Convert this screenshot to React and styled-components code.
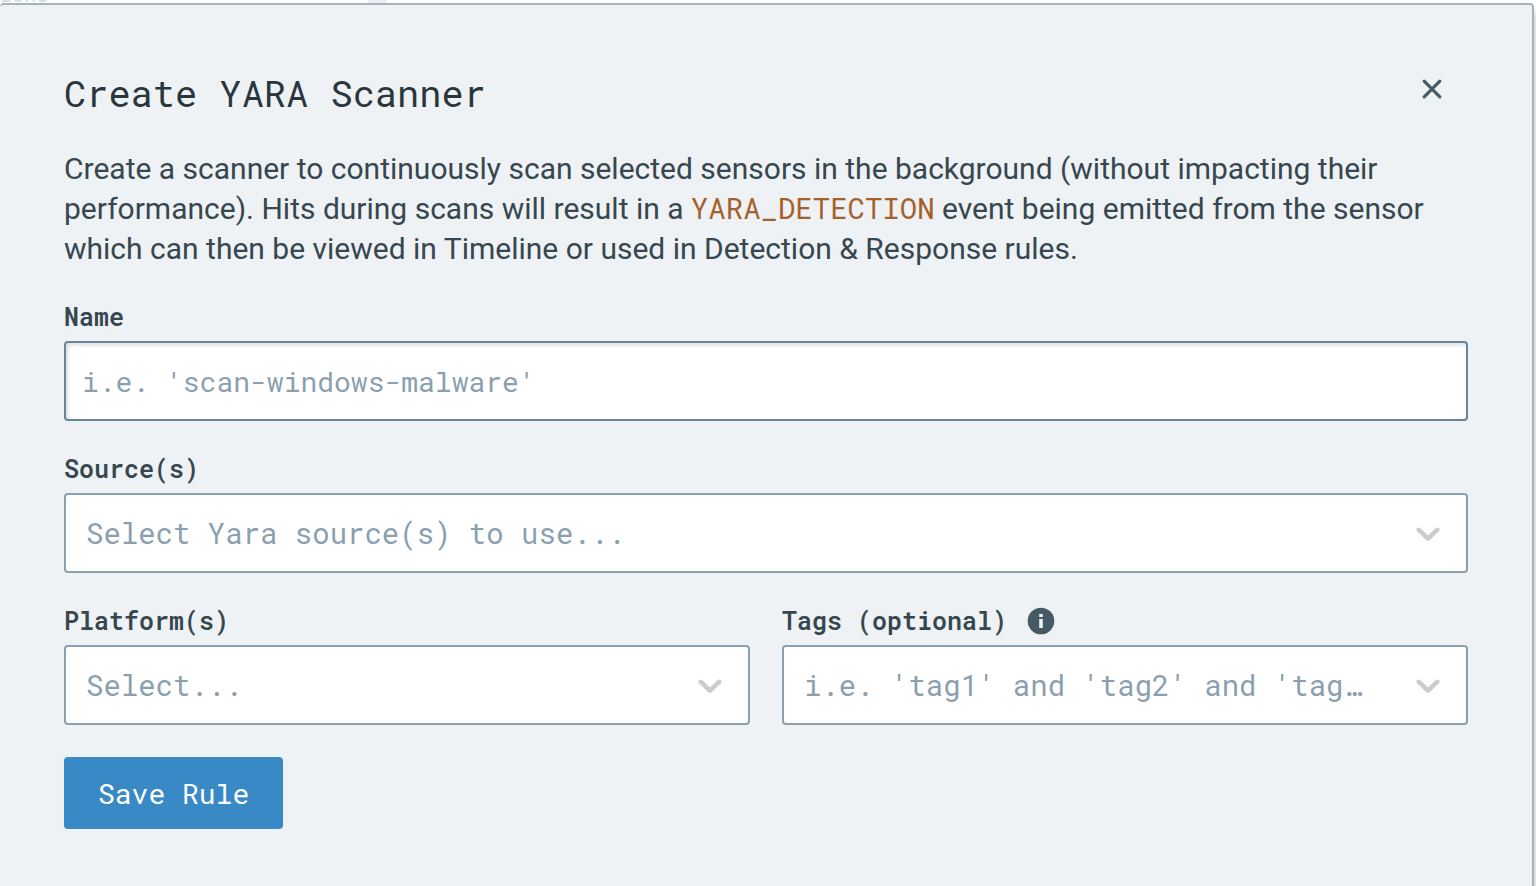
import { useId } from "react"
import styled, { createGlobalStyle } from "styled-components"

const mono = `"Roboto Mono", "Liberation Mono", monospace`

const GlobalStyle = createGlobalStyle`
    * {
        box-sizing: border-box;
    }

    body {
        margin: 0;
        background: #fff;
        color: #37474f;
        font-family: Roboto, "Liberation Sans", sans-serif;
    }
`;

//Page behind the dialog
const Page = styled.div`
    display: flex;
    flex-direction: column;
    min-height: 100vh;
    overflow: hidden;
`;

const Backdrop = styled.div`
    display: flex;
    align-items: flex-end;
    height: 3px;
    overflow: hidden;
`;

const BackdropHeading = styled.span`
    width: 368px;
    color: #d8d8dc;
    font-family: ${mono};
    font-size: 20px;
    line-height: 18px;
`;

const BackdropColumn = styled.div`
    align-self: stretch;
    width: 19px;
    background: #eeeef2;
`;

//Dialog
const Dialog = styled.section`
    flex: 1;
    margin-right: 2px;
    padding: 64px 64px 56px;
    border: 2px solid #a2b4c2;
    border-width: 2px 2px 0 0;
    border-radius: 4px 4px 0 0;
    background: #eef2f5;
    box-shadow: 0 8px 8px rgba(0, 0, 0, 0.3);
`;

const Header = styled.header`
    display: flex;
    align-items: flex-start;
    justify-content: space-between;
    padding-right: 22px;
`;

const Title = styled.h1`
    margin: 0;
    color: #29363d;
    font-family: ${mono};
    font-size: 37px;
    font-weight: 400;
    line-height: 48px;
`;

const CloseButton = styled.button`
    display: flex;
    padding: 6px 0;
    border: 0;
    background: none;
    color: #455a64;
    cursor: pointer;
`;

const Description = styled.p`
    margin: 32px 0;
    font-size: 30px;
    line-height: 40px;
`;

const EventName = styled.code`
    color: #a6602b;
    font-family: ${mono};
    font-size: 29px;
    line-height: 32px;
`;

//Form
const Form = styled.form`
    display: grid;
    grid-template-columns: 1fr 1fr;
    gap: 32px;
`;

const Field = styled.div`
    display: flex;
    flex-direction: column;
    gap: 8px;
    min-width: 0;
    grid-column: ${({ $wide }) => ($wide ? "1 / -1" : "auto")};
`;

const LabelRow = styled.div`
    display: flex;
    align-items: center;
    gap: 20px;
    height: 32px;
`;

const Label = styled.label`
    font-family: ${mono};
    font-size: 25px;
    font-weight: 600;
    line-height: 32px;
`;

const TextInput = styled.input`
    width: 100%;
    height: 80px;
    padding: 0 16px;
    border: 2px solid #67859a;
    border-radius: 4px;
    background: #fff;
    box-shadow: inset 2px 2px 4px rgba(0, 0, 0, 0.14);
    color: #37474f;
    font-family: ${mono};
    font-size: 28px;
    outline: none;

    &::placeholder {
        color: #8a9fb0;
        opacity: 1;
    }
`;

const SelectBox = styled.div`
    display: grid;
    align-items: center;
`;

const Select = styled.select`
    grid-area: 1 / 1;
    width: 100%;
    min-width: 0;
    height: 80px;
    padding: 0 94px 0 20px;
    border: 2px solid #8a9fb0;
    border-radius: 4px;
    appearance: none;
    background: #fff;
    color: #8a9fb0;
    font-family: ${mono};
    font-size: 29px;
    text-overflow: ellipsis;
    white-space: nowrap;
    overflow: hidden;
`;

const Chevron = styled.svg`
    grid-area: 1 / 1;
    justify-self: end;
    width: 40px;
    height: 40px;
    margin-right: 20px;
    fill: #ccc;
    pointer-events: none;
`;

const SaveButton = styled.button`
    justify-self: start;
    height: 72px;
    padding: 0 34px;
    border: 0;
    border-radius: 4px;
    background: #3989c7;
    color: #fff;
    font-family: ${mono};
    font-size: 28px;
    cursor: pointer;
`;

const CloseIcon = () => (
    <svg width="28" height="28" viewBox="0 0 28 28" fill="none" stroke="currentColor" strokeWidth="3.2" strokeLinecap="round" aria-hidden="true">
        <path d="M6.2 6.2 21.8 21.8M21.8 6.2 6.2 21.8" />
    </svg>
);

const InfoIcon = () => (
    <svg width="28" height="28" viewBox="0 0 28 28" role="img" aria-label="About tags">
        <circle cx="14" cy="14" r="13.3" fill="#455a64" />
        <path d="M12.2 7h3.6v3h-3.6zM12.2 12h3.6v9h-3.6z" fill="#eef2f5" />
    </svg>
);

const SelectField = ({ label, placeholder, wide, children }) => {
    const id = useId();

    return (
        <Field $wide={wide}>
            <LabelRow>
                <Label htmlFor={id}>{label}</Label>
                {children}
            </LabelRow>
            <SelectBox>
                <Select id={id} defaultValue="">
                    <option value="">{placeholder}</option>
                </Select>
                <Chevron viewBox="0 0 20 20" aria-hidden="true">
                    <path d="M4.516 7.548c0.436-0.446 1.043-0.481 1.576 0l3.908 3.747 3.908-3.747c0.533-0.481 1.141-0.446 1.574 0 0.436 0.445 0.408 1.197 0 1.615-0.406 0.418-4.695 4.502-4.695 4.502-0.217 0.223-0.502 0.335-0.787 0.335s-0.57-0.112-0.789-0.335c0 0-4.287-4.084-4.695-4.502s-0.436-1.17 0-1.615z" />
                </Chevron>
            </SelectBox>
        </Field>
    );
}

export default function App() {
    return (
        <Page>
            <GlobalStyle />
            <Backdrop aria-hidden="true">
                <BackdropHeading>ions</BackdropHeading>
                <BackdropColumn />
            </Backdrop>
            <Dialog role="dialog" aria-labelledby="dialog-title">
                <Header>
                    <Title id="dialog-title">Create YARA Scanner</Title>
                    <CloseButton type="button" aria-label="Close">
                        <CloseIcon />
                    </CloseButton>
                </Header>
                <Description>
                    Create a scanner to continuously scan selected sensors in the background (without impacting their
                    performance). Hits during scans will result in a <EventName>YARA_DETECTION</EventName> event being
                    emitted from the sensor which can then be viewed in Timeline or used in Detection &amp; Response rules.
                </Description>
                <Form onSubmit={(e) => e.preventDefault()}>
                    <Field $wide>
                        <LabelRow>
                            <Label htmlFor="scanner-name">Name</Label>
                        </LabelRow>
                        <TextInput id="scanner-name" placeholder="i.e. 'scan-windows-malware'" />
                    </Field>
                    <SelectField wide label="Source(s)" placeholder="Select Yara source(s) to use..." />
                    <SelectField label="Platform(s)" placeholder="Select..." />
                    <SelectField label="Tags (optional)" placeholder="i.e. 'tag1' and 'tag2' and 'tag3'">
                        <InfoIcon />
                    </SelectField>
                    <SaveButton type="submit">Save Rule</SaveButton>
                </Form>
            </Dialog>
        </Page>
    );
}
